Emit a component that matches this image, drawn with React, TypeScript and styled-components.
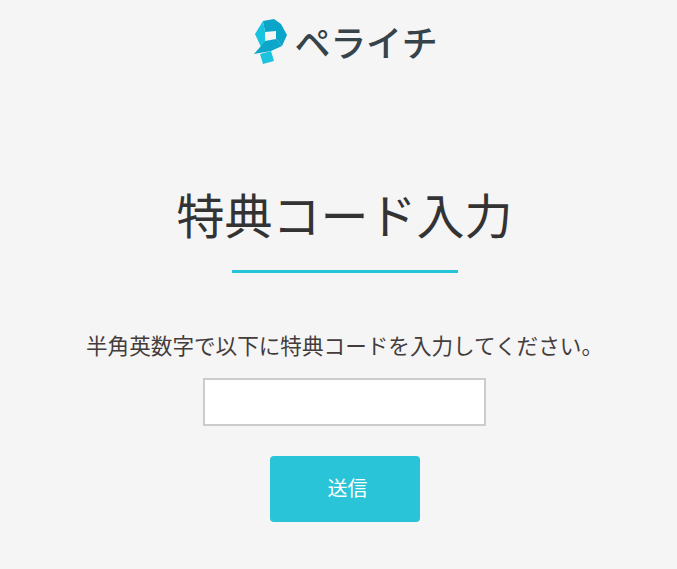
import * as React from "react";
import styled, { createGlobalStyle } from "styled-components";

const GlobalStyle = createGlobalStyle`
  html, body {
    margin: 0;
    padding: 0;
    height: 100%;
    overflow: hidden;
    background: #f5f5f5;
  }
`;

const Page = styled.div`
  width: 689px;
  height: 569px;
  display: flex;
  flex-direction: column;
  align-items: center;
  font-family: "Noto Sans CJK JP", "Noto Sans", sans-serif;
  color: #333333;
`;

const Header = styled.header`
  display: flex;
  align-items: center;
  gap: 8px;
  height: 48px;
  margin: 17px 0 0 2px;
`;

const LogoText = styled.span`
  font-size: 36px;
  font-weight: 500;
  line-height: 48px;
  color: #36434a;
  letter-spacing: -0.3px;
`;

const Title = styled.h1`
  margin: 113px 0 0;
  font-size: 48px;
  font-weight: 400;
  line-height: 70px;
  color: #333333;
`;

const Rule = styled.div`
  width: 226px;
  height: 3px;
  margin-top: 22px;
  background: #26c4d8;
`;

const Lead = styled.p`
  margin: 57px 0 0;
  font-size: 21.6px;
  line-height: 30px;
  color: #443c3c;
  white-space: nowrap;
`;

const Form = styled.form`
  display: flex;
  flex-direction: column;
  align-items: center;
  gap: 30px;
  margin-top: 18px;
`;

const CodeInput = styled.input`
  box-sizing: border-box;
  width: 283px;
  height: 48px;
  border: 2px solid #cccccc;
  background: #ffffff;
  outline: none;
`;

const Submit = styled.button`
  width: 150px;
  height: 66px;
  padding: 0 0 4px 6px;
  border: none;
  border-radius: 4px;
  background: #29c4d8;
  color: #ffffff;
  font-family: inherit;
  font-size: 20px;
  font-weight: 400;
  cursor: pointer;
`;

const Logo = () => (
  <svg width="33" height="45" viewBox="0 0 33 45">
    <polygon points="9,2 20,0 27,5 33,16 28,27 22,20 22,12 11,13" fill="#0aa5c9" />
    <polygon points="9,2 1,15 7,28 11,22 11,13" fill="#17c3df" />
    <polygon points="0,35 7,27 11,22 22,20 28,27 17,32" fill="#0ba6c9" />
    <polygon points="6,35 17,32 20,42 9,45" fill="#1cc2de" />
  </svg>
);

export default function App() {
  return (
    <Page>
      <GlobalStyle />
      <Header>
        <Logo />
        <LogoText>ペライチ</LogoText>
      </Header>
      <Title>特典コード入力</Title>
      <Rule />
      <Lead>半角英数字で以下に特典コードを入力してください。</Lead>
      <Form>
        <CodeInput type="text" />
        <Submit type="button">送信</Submit>
      </Form>
    </Page>
  );
}
